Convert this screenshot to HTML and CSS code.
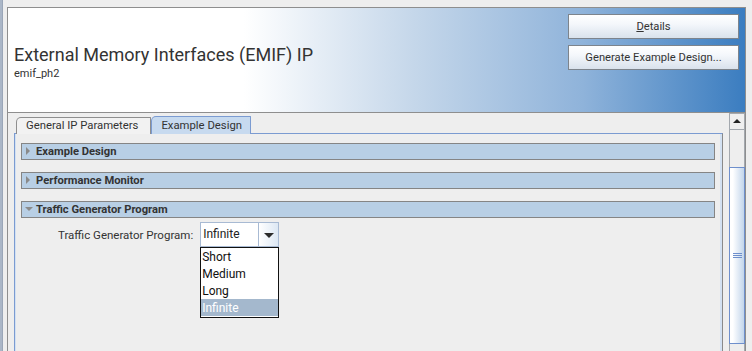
FILE: index.html
```html
<!DOCTYPE html>
<html lang="en">
<head>
<meta charset="UTF-8">
<title>External Memory Interfaces (EMIF) IP</title>
<link rel="stylesheet" href="styles.css">
</head>
<body>
<div class="app">
    <div class="edge"></div>
    <div class="window">
        <div class="banner">
            <div class="ip-title">
                <h1>External Memory Interfaces (EMIF) IP</h1>
                <div class="ip-name">emif_ph2</div>
            </div>
            <div class="actions">
                <button class="btn"><u>D</u>etails</button>
                <button class="btn">Generate Example Design...</button>
            </div>
        </div>
        <div class="workspace">
            <div class="scroll-view">
                <div class="tabs">
                    <span class="tab">General IP Parameters</span>
                    <span class="tab active">Example Design</span>
                </div>
                <div class="tab-panel">
                    <div class="section">Example Design</div>
                    <div class="section">Performance Monitor</div>
                    <div class="section open">Traffic Generator Program</div>
                    <div class="field-row">
                        <label class="field-label">Traffic Generator Program:</label>
                        <div class="combo">
                            <span class="combo-value">Infinite</span>
                            <span class="combo-arrow"></span>
                            <ul class="combo-list">
                                <li>Short</li>
                                <li>Medium</li>
                                <li>Long</li>
                                <li class="selected">Infinite</li>
                            </ul>
                        </div>
                    </div>
                </div>
            </div>
            <div class="scrollbar">
                <div class="sb-up"></div>
                <div class="sb-track">
                    <div class="sb-thumb"><span class="grip"></span></div>
                </div>
            </div>
        </div>
    </div>
</div>
</body>
</html>
```

FILE: styles.css
```css
* {
    padding: 0;
    margin: 0;
    box-sizing: border-box;
}

body {
    background-color: #eeeeee;
    font-family: Roboto, "Liberation Sans", sans-serif;
    color: #333333;
    overflow: hidden;
}

.app {
    display: flex;
    height: 351px;
}

.edge {
    width: 3px;
    background-color: #aab6c7;
    border-right: 1px solid #9aa6b8;
}

.window {
    flex: 1;
    display: flex;
    flex-direction: column;
    margin: 7px 6px 0 4px;
    border: 1px solid #8e8e8e;
    border-bottom: none;
}

/* banner */
.banner {
    height: 105px;
    display: flex;
    justify-content: space-between;
    background: linear-gradient(to right, #ffffff 32%, #c5d7ea 55%, #8fb3da 78%, #3b7dc0 100%);
    border-bottom: 1px solid #8e8e8e;
}

.ip-title {
    align-self: center;
    padding: 5px 0 0 6px;
}

.ip-title h1 {
    font-size: 18px;
    font-weight: normal;
    line-height: 20px;
    color: #333333;
}

.ip-name {
    font-size: 11px;
    line-height: 14px;
    margin-top: 2px;
}

.actions {
    display: flex;
    flex-direction: column;
    gap: 6px;
    padding: 6px 6px 0 0;
}

.btn {
    width: 171px;
    height: 25px;
    border: 1px solid #7d848c;
    background: linear-gradient(to bottom, #ffffff, #f4f7fb 40%, #d9e2ec);
    font-family: Roboto, "Liberation Sans", sans-serif;
    font-size: 11.2px;
    color: #333333;
}

/* tabs area */
.workspace {
    flex: 1;
    display: flex;
    min-height: 0;
}

.scroll-view {
    flex: 1;
    padding: 3px 6px 0 6px;
    display: flex;
    flex-direction: column;
}

.tabs {
    display: flex;
    align-items: flex-end;
    padding-left: 2px;
    margin-bottom: -1px;
    position: relative;
    z-index: 1;
}

.tab {
    font-size: 11.3px;
    height: 17px;
    line-height: 16px;
    padding: 0 12px 0 9px;
    border: 1px solid #8e8e8e;
    border-bottom: none;
    border-radius: 5px 1px 0 0;
    background-color: #f2f2f2;
    color: #333333;
}

.tab.active {
    height: 18px;
    line-height: 17px;
    padding: 0 8px 0 9px;
    border-color: #7b9bd1;
    background-color: #c7daef;
}

.tab-panel {
    flex: 1;
    border: 1px solid #7b9bd1;
    border-right: 1px solid #8a8a8a;
    border-bottom: none;
    box-shadow: inset -2px 0 0 #d3e1f2, inset 1px 0 0 #d3e1f2;
    padding: 9px 7px 0 6px;
}

.section {
    height: 17px;
    line-height: 15px;
    border: 1px solid #858585;
    background-color: #b8cfe5;
    font-size: 11.2px;
    font-weight: bold;
    color: #333333;
    padding-left: 14px;
    margin-bottom: 12px;
    position: relative;
}

.section::before {
    content: "";
    position: absolute;
    left: 4px;
    top: 3px;
    border-left: 4px solid #8a8a8a;
    border-top: 4px solid transparent;
    border-bottom: 4px solid transparent;
}

.section.open {
    margin-bottom: 4px;
}

.section.open::before {
    left: 3px;
    top: 5px;
    border-top: 4px solid #8a8a8a;
    border-left: 4px solid transparent;
    border-right: 4px solid transparent;
    border-bottom: none;
}

.field-row {
    display: flex;
    align-items: center;
    gap: 7px;
    padding-left: 37px;
}

.field-label {
    font-size: 11.5px;
    color: #333333;
}

.combo {
    display: flex;
    width: 79px;
    height: 25px;
    position: relative;
}

.combo-value {
    flex: 1;
    border: 1px solid #a8bad3;
    background-color: #ffffff;
    font-size: 12px;
    line-height: 22px;
    padding-left: 2px;
    color: #222222;
}

.combo-arrow {
    width: 20px;
    border: 1px solid #a8bad3;
    border-left: none;
    background: linear-gradient(to right, #ffffff, #dde8f4);
    position: relative;
}

.combo-arrow::after {
    content: "";
    position: absolute;
    left: 5px;
    top: 10px;
    border-top: 5px solid #2b2b2b;
    border-left: 5px solid transparent;
    border-right: 5px solid transparent;
}

.combo-list {
    list-style: none;
    position: absolute;
    left: 0;
    top: 25px;
    width: 79px;
    border: 1px solid #111111;
    background-color: #ffffff;
    padding-bottom: 1px;
}

.combo-list li {
    height: 17px;
    line-height: 18px;
    font-size: 12px;
    padding-left: 1px;
    color: #111111;
}

.combo-list li.selected {
    background-color: #a4b8cd;
    color: #ffffff;
}

/* scrollbar */
.scrollbar {
    width: 16px;
    display: flex;
    flex-direction: column;
}

.sb-up {
    height: 17px;
    border: 1px solid #a3a8ae;
    background-color: #efefef;
    position: relative;
}

.sb-up::after {
    content: "";
    position: absolute;
    left: 3px;
    top: 5px;
    border-bottom: 4px solid #222222;
    border-left: 4px solid transparent;
    border-right: 4px solid transparent;
}

.sb-track {
    flex: 1;
    border-left: 1px solid #a3a8ae;
    border-right: 1px solid #a3a8ae;
    padding-top: 37px;
}

.sb-thumb {
    height: 177px;
    margin: 0 -1px;
    border: 1px solid #6e8fcc;
    background: linear-gradient(to right, #ffffff 20%, #c2d5eb);
    position: relative;
}

.grip {
    position: absolute;
    left: 3px;
    top: 85px;
    width: 9px;
    height: 5px;
    border-top: 1px solid #6e8fcc;
    border-bottom: 1px solid #6e8fcc;
}

.grip::after {
    content: "";
    position: absolute;
    left: 0;
    right: 0;
    top: 1px;
    border-top: 1px solid #6e8fcc;
}
```
